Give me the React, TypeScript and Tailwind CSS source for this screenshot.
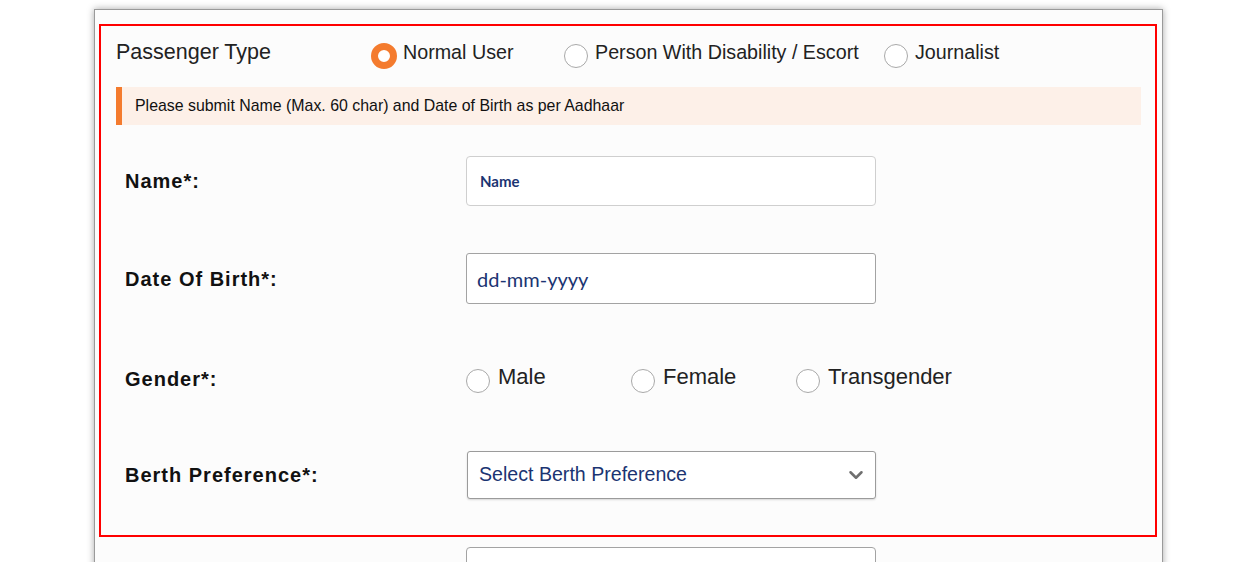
import { ChevronDown } from "lucide-react";

const arial = { fontFamily: '"Liberation Sans", Arial, sans-serif' };

function Radio({ checked = false }: { checked?: boolean }) {
  if (checked) {
    return (
      <span className="block w-[26px] h-[26px] rounded-full border-[7px] border-[#f47b2e] bg-white shrink-0" />
    );
  }
  return (
    <span className="block w-[24px] h-[24px] rounded-full border border-[#a9a9a9] bg-white shrink-0" />
  );
}

function FormRow({
  label,
  className,
  children,
}: {
  label: string;
  className: string;
  children: React.ReactNode;
}) {
  return (
    <div className={"flex items-center " + className}>
      <div className="w-[365px] pl-[24px] text-[20px] font-bold tracking-[1px] text-[#111]">
        {label}
      </div>
      {children}
    </div>
  );
}

export default function App() {
  const passengerTypes = [
    { label: "Normal User", width: "w-[193px]", checked: true },
    { label: "Person With Disability / Escort", width: "w-[320px]", checked: false },
    { label: "Journalist", width: "w-[200px]", checked: false },
  ];
  const genders = ["Male", "Female", "Transgender"];

  return (
    <div className="min-h-screen bg-white overflow-hidden" style={arial}>
      <div className="ml-[94px] mt-[9px] w-[1069px] h-[600px] border border-[#9a9a9a] bg-[#fcfcfc] shadow-[0_0_7px_rgba(0,0,0,0.35)] pt-[14px] pl-[4px] pr-[5px]">
        <div className="border-2 border-[#ff0000] pb-[36px]">
          {/* passenger type */}
          <div className="flex items-start pt-[14px] pl-[15px]">
            <div className="w-[254px] text-[21.5px] leading-[24px] text-[#222]">Passenger Type</div>
            {passengerTypes.map((p) => (
              <div key={p.label} className={"flex items-start " + p.width}>
                <div className={p.checked ? "mt-[3px] ml-[1px]" : "mt-[4px] ml-[1px]"}>
                  <Radio checked={p.checked} />
                </div>
                <span
                  className={
                    "text-[19.7px] leading-[24px] text-[#222] " +
                    (p.checked ? "ml-[6px]" : "ml-[7px]")
                  }
                >
                  {p.label}
                </span>
              </div>
            ))}
          </div>

          <div className="mx-[15px] mr-[14px] mt-[18px] h-[38px] flex items-center bg-[#fdf0e8] border-l-[6px] border-[#f47b2e] pl-[13px] text-[15.9px] text-[#111]">
            Please submit Name (Max. 60 char) and Date of Birth as per Aadhaar
          </div>

          <FormRow label="Name*:" className="mt-[31px]">
            <div className="w-[410px] h-[50px] border border-[#cfcfcf] rounded-[4px] bg-white flex items-center pl-[13px]">
              <span className="text-[15px] font-bold text-[#1b3472]" style={{ fontFamily: "Lato, sans-serif" }}>
                Name
              </span>
            </div>
          </FormRow>

          <FormRow label="Date Of Birth*:" className="mt-[47px]">
            <div className="w-[410px] h-[51px] border border-[#a3a3a3] rounded-[3px] bg-white flex items-center pl-[10px]">
              <span className="text-[20px] text-[#1b3472]" style={{ fontFamily: "Lato, sans-serif" }}>
                dd-mm-yyyy
              </span>
            </div>
          </FormRow>

          <FormRow label="Gender*:" className="mt-[50px] h-[50px]">
            {genders.map((g) => (
              <div key={g} className="w-[165px] flex items-start">
                <div className="mt-[4px]">
                  <Radio />
                </div>
                <span className="ml-[8px] text-[22px] leading-[24px] text-[#222]">{g}</span>
              </div>
            ))}
          </FormRow>

          <FormRow label="Berth Preference*:" className="mt-[47px]">
            <div className="ml-[1px] w-[409px] h-[48px] border border-[#9b9b9b] rounded-[3px] bg-white shadow-[0_1px_2px_rgba(0,0,0,0.15)] flex items-center justify-between pl-[11px] pr-[8px]">
              <span className="text-[19.6px] text-[#1b3472]">Select Berth Preference</span>
              <ChevronDown className="w-[22px] h-[22px] text-[#6f6f6f]" strokeWidth={2.75} />
            </div>
          </FormRow>
        </div>

        <div className="mt-[10px] ml-[367px] w-[410px] h-[50px] border border-[#a3a3a3] rounded-[4px] bg-white" />
      </div>
    </div>
  );
}
